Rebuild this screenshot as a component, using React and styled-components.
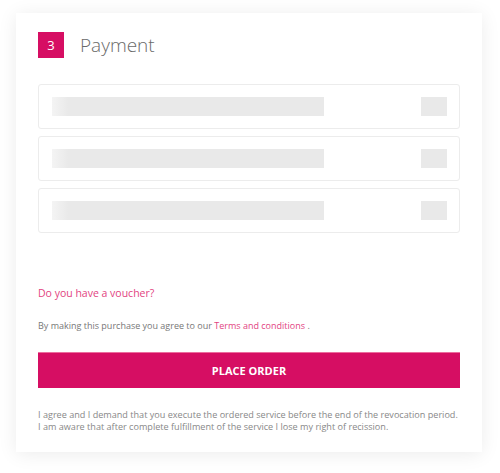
import React from 'react';
import styled, { createGlobalStyle } from 'styled-components';

const Global = createGlobalStyle`
    body {
        margin: 0;
        background: #fff;
        font-family: 'Open Sans', 'Liberation Sans', sans-serif;
    }
`

const Page = styled.div`
    padding: 13px 18px 21px 16px;
`

const Card = styled.div`
    background: #fff;
    box-shadow: 0 2px 18px rgba(0, 0, 0, 0.08);
    padding: 19px 22px 19px 22px;
`

const Header = styled.div`
    display: flex;
    align-items: center;
    gap: 16px;
    height: 26px;
`

const Step = styled.div`
    width: 26px;
    height: 26px;
    background: #d60e63;
    color: #fff;
    font-size: 13px;
    display: flex;
    align-items: center;
    justify-content: center;
`

const Title = styled.h2`
    margin: 0;
    font-size: 19px;
    font-weight: 300;
    color: #6a6a6a;
`

const Methods = styled.div`
    display: flex;
    flex-direction: column;
    gap: 7px;
    margin-top: 26px;
`

const Method = styled.div`
    height: 43px;
    border: 1px solid #ececec;
    border-radius: 3px;
    display: flex;
    align-items: center;
    justify-content: space-between;
    padding: 0 12px 0 13px;
`

const Bar = styled.div`
    width: ${p => p.w}px;
    height: 19px;
    background: ${p => p.fade
        ? 'linear-gradient(90deg, #f4f4f4 0%, #e9e9e9 6%, #e9e9e9 100%)'
        : '#e9e9e9'};
`

const Voucher = styled.a`
    display: block;
    margin-top: 53px;
    font-size: 10.5px;
    color: #e2437f;
    text-decoration: none;
`

const Terms = styled.p`
    margin: 19px 0 0;
    font-size: 9px;
    color: #777;
`

const Link = styled.a`
    color: #e2437f;
    text-decoration: none;
`

const Button = styled.button`
    display: block;
    width: 100%;
    height: 36px;
    margin-top: 20px;
    border: none;
    border-top: 1px solid #ec6d9e;
    background: #d60e63;
    color: #fff;
    font-family: inherit;
    font-size: 11px;
    font-weight: 700;
    cursor: pointer;
`

const Notice = styled.p`
    margin: 21px 0 0;
    font-size: 9.1px;
    line-height: 12px;
    color: #888;
`

const App = () => {
    return (
        <Page>
            <Global />
            <Card>
                <Header>
                    <Step>3</Step>
                    <Title>Payment</Title>
                </Header>
                <Methods>
                    {[0, 1, 2].map(i =>
                        <Method key={i}>
                            <Bar w={272} fade />
                            <Bar w={26} />
                        </Method>
                    )}
                </Methods>
                <Voucher href="#">Do you have a voucher?</Voucher>
                <Terms>
                    By making this purchase you agree to our <Link href="#">Terms and conditions</Link> .
                </Terms>
                <Button>PLACE ORDER</Button>
                <Notice>
                    I agree and I demand that you execute the ordered service before the end of the revocation period.<br />
                    I am aware that after complete fulfillment of the service I lose my right of recission.
                </Notice>
            </Card>
        </Page>
    )
}

export default App
